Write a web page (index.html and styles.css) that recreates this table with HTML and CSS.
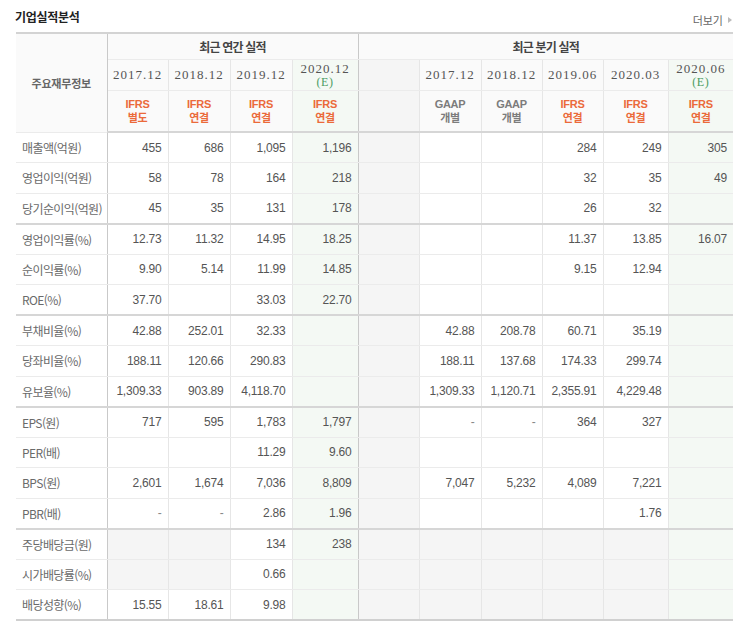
FILE: index.html
```html
<!DOCTYPE html>
<html lang="ko">
<head>
<meta charset="utf-8">
<title>기업실적분석</title>
<link rel="stylesheet" href="styles.css">
</head>
<body>
<div class="wrap">
  <div class="head">
    <h3 class="title">기업실적분석</h3>
    <a class="more" href="#">더보기<span class="arr"></span></a>
  </div>
  <table class="perf">
    <colgroup>
      <col class="c-label">
      <col class="c61"><col class="c62"><col class="c62"><col class="c66">
      <col class="c61"><col class="c62"><col class="c61"><col class="c61"><col class="c65"><col class="c65">
    </colgroup>
    <thead>
      <tr class="h1">
        <th rowspan="3" class="lab-h major-r">주요재무정보</th>
        <th colspan="4" class="grp major-r">최근 연간 실적</th>
        <th colspan="6" class="grp">최근 분기 실적</th>
      </tr>
      <tr class="h2">
        <th class="yr">2017.12</th>
        <th class="yr">2018.12</th>
        <th class="yr">2019.12</th>
        <th class="yr est major-r"><span class="ln y1">2020.12</span><em class="ln">(E)</em></th>
        <th class="yr gray"></th>
        <th class="yr">2017.12</th>
        <th class="yr">2018.12</th>
        <th class="yr">2019.06</th>
        <th class="yr">2020.03</th>
        <th class="yr est"><span class="ln y1">2020.06</span><em class="ln">(E)</em></th>
      </tr>
      <tr class="h3">
        <th class="acc"><span class="ln">IFRS</span><span class="ln">별도</span></th>
        <th class="acc"><span class="ln">IFRS</span><span class="ln">연결</span></th>
        <th class="acc"><span class="ln">IFRS</span><span class="ln">연결</span></th>
        <th class="acc est major-r"><span class="ln">IFRS</span><span class="ln">연결</span></th>
        <th class="gray"></th>
        <th class="acc gaap"><span class="ln">GAAP</span><span class="ln">개별</span></th>
        <th class="acc gaap"><span class="ln">GAAP</span><span class="ln">개별</span></th>
        <th class="acc"><span class="ln">IFRS</span><span class="ln">연결</span></th>
        <th class="acc"><span class="ln">IFRS</span><span class="ln">연결</span></th>
        <th class="acc est"><span class="ln">IFRS</span><span class="ln">연결</span></th>
      </tr>
    </thead>
    <tbody>
      <tr class="first">
        <th class="lab major-r">매출액(억원)</th>
        <td>455</td><td>686</td><td>1,095</td><td class="est major-r">1,196</td>
        <td class="gray"></td><td></td><td></td><td>284</td><td>249</td><td class="est">305</td>
      </tr>
      <tr>
        <th class="lab major-r">영업이익(억원)</th>
        <td>58</td><td>78</td><td>164</td><td class="est major-r">218</td>
        <td class="gray"></td><td></td><td></td><td>32</td><td>35</td><td class="est">49</td>
      </tr>
      <tr>
        <th class="lab major-r">당기순이익(억원)</th>
        <td>45</td><td>35</td><td>131</td><td class="est major-r">178</td>
        <td class="gray"></td><td></td><td></td><td>26</td><td>32</td><td class="est"></td>
      </tr>
      <tr class="sep">
        <th class="lab major-r">영업이익률(%)</th>
        <td>12.73</td><td>11.32</td><td>14.95</td><td class="est major-r">18.25</td>
        <td class="gray"></td><td></td><td></td><td>11.37</td><td>13.85</td><td class="est">16.07</td>
      </tr>
      <tr>
        <th class="lab major-r">순이익률(%)</th>
        <td>9.90</td><td>5.14</td><td>11.99</td><td class="est major-r">14.85</td>
        <td class="gray"></td><td></td><td></td><td>9.15</td><td>12.94</td><td class="est"></td>
      </tr>
      <tr>
        <th class="lab major-r">ROE(%)</th>
        <td>37.70</td><td></td><td>33.03</td><td class="est major-r">22.70</td>
        <td class="gray"></td><td></td><td></td><td></td><td></td><td class="est"></td>
      </tr>
      <tr class="sep">
        <th class="lab major-r">부채비율(%)</th>
        <td>42.88</td><td>252.01</td><td>32.33</td><td class="est major-r"></td>
        <td class="gray"></td><td>42.88</td><td>208.78</td><td>60.71</td><td>35.19</td><td class="est"></td>
      </tr>
      <tr>
        <th class="lab major-r">당좌비율(%)</th>
        <td>188.11</td><td>120.66</td><td>290.83</td><td class="est major-r"></td>
        <td class="gray"></td><td>188.11</td><td>137.68</td><td>174.33</td><td>299.74</td><td class="est"></td>
      </tr>
      <tr>
        <th class="lab major-r">유보율(%)</th>
        <td>1,309.33</td><td>903.89</td><td>4,118.70</td><td class="est major-r"></td>
        <td class="gray"></td><td>1,309.33</td><td>1,120.71</td><td>2,355.91</td><td>4,229.48</td><td class="est"></td>
      </tr>
      <tr class="sep">
        <th class="lab major-r">EPS(원)</th>
        <td>717</td><td>595</td><td>1,783</td><td class="est major-r">1,797</td>
        <td class="gray"></td><td class="dash">-</td><td class="dash">-</td><td>364</td><td>327</td><td class="est"></td>
      </tr>
      <tr>
        <th class="lab major-r">PER(배)</th>
        <td></td><td></td><td>11.29</td><td class="est major-r">9.60</td>
        <td class="gray"></td><td></td><td></td><td></td><td></td><td class="est"></td>
      </tr>
      <tr>
        <th class="lab major-r">BPS(원)</th>
        <td>2,601</td><td>1,674</td><td>7,036</td><td class="est major-r">8,809</td>
        <td class="gray"></td><td>7,047</td><td>5,232</td><td>4,089</td><td>7,221</td><td class="est"></td>
      </tr>
      <tr>
        <th class="lab major-r">PBR(배)</th>
        <td class="dash">-</td><td class="dash">-</td><td>2.86</td><td class="est major-r">1.96</td>
        <td class="gray"></td><td></td><td></td><td></td><td>1.76</td><td class="est"></td>
      </tr>
      <tr class="sep">
        <th class="lab major-r">주당배당금(원)</th>
        <td class="gray"></td><td class="gray"></td><td>134</td><td class="est major-r">238</td>
        <td class="gray"></td><td class="gray"></td><td class="gray"></td><td class="gray"></td><td class="gray"></td><td class="est"></td>
      </tr>
      <tr>
        <th class="lab major-r">시가배당률(%)</th>
        <td class="gray"></td><td class="gray"></td><td>0.66</td><td class="est major-r"></td>
        <td class="gray"></td><td class="gray"></td><td class="gray"></td><td class="gray"></td><td class="gray"></td><td class="est"></td>
      </tr>
      <tr>
        <th class="lab major-r">배당성향(%)</th>
        <td>15.55</td><td>18.61</td><td>9.98</td><td class="est major-r"></td>
        <td class="gray"></td><td class="gray"></td><td class="gray"></td><td class="gray"></td><td class="gray"></td><td class="est"></td>
      </tr>
    </tbody>
  </table>
</div>
</body>
</html>
```
FILE: styles.css
```css
html, body {
  margin: 0;
  padding: 0;
  background: #fff;
}
body {
  font-family: "Noto Sans CJK KR", "Noto Sans", sans-serif;
  color: #555;
}
.wrap {
  width: 717px;
  padding: 0 10px 0 16px;
}
.head {
  display: flex;
  justify-content: space-between;
  align-items: flex-start;
  height: 32px;
}
.title {
  margin: 0;
  padding-top: 8px;
  margin-left: -1px;
  font-size: 12px;
  line-height: 18px;
  font-weight: 700;
  letter-spacing: -0.3px;
  color: #222;
}
.more {
  display: flex;
  align-items: center;
  margin-top: 12px;
  margin-right: 0;
  font-size: 11px;
  line-height: 16px;
  letter-spacing: 0;
  color: #666;
  text-decoration: none;
}
.arr {
  display: inline-block;
  width: 0;
  height: 0;
  margin-left: 5px;
  margin-right: 1px;
  border-left: 4px solid #bbb;
  border-top: 3px solid transparent;
  border-bottom: 3px solid transparent;
}
.perf {
  width: 717px;
  table-layout: fixed;
  border-collapse: collapse;
  border-top: 2px solid #d3d3d3;
  border-bottom: 2px solid #d0d0d0;
}
.c-label { width: 91px; }
.c61 { width: 61px; }
.c62 { width: 62px; }
.c65 { width: 65px; }
.c66 { width: 66px; }
.perf th,
.perf td {
  padding: 0;
  border: 1px solid #ebebeb;
  border-left-color: #e6e6e6;
  border-right-color: #e6e6e6;
}
.perf thead th {
  background: #fafafa;
}
.perf .major-r {
  border-right: 1px solid #c9c9c9;
}
.perf tr:first-child th,
.perf tr:first-child td {
  border-top: 0;
}
.perf td:last-child,
.perf th:last-child {
  border-right: 0;
}
.perf .lab-h,
.perf .lab {
  border-left: 0;
}
.h1 { height: 26px; }
.h2 { height: 31px; }
.h3 { height: 42px; }
.ln {
  display: block;
}
.lab-h {
  font-size: 11px;
  font-weight: 700;
  letter-spacing: -0.2px;
  color: #666;
  border-bottom: 2px solid #d6d6d6;
}
.grp {
  font-size: 12px;
  font-weight: 700;
  letter-spacing: -0.8px;
  color: #444;
}
.yr {
  font-family: "Liberation Serif", "DejaVu Serif", serif;
  font-size: 13px;
  font-weight: 400;
  letter-spacing: 1px;
  line-height: 15px;
  color: #555;
}
.yr .y1 {
  line-height: 15px;
}
.yr em {
  font-style: normal;
  font-size: 12px;
  line-height: 13px;
  color: #4b9c63;
  letter-spacing: 0.5px;
}
.h3 th {
  border-bottom: 2px solid #d6d6d6;
}
.acc {
  font-family: "Liberation Sans", "Noto Sans CJK KR", sans-serif;
  font-size: 11px;
  font-weight: 700;
  line-height: 14px;
  letter-spacing: -0.3px;
  color: #eb6a3a;
  padding-top: 1px;
}
.acc.gaap {
  color: #7c7c7c;
}
.perf thead th.est,
.perf td.est {
  background: #f4f9f4;
}
.perf thead th.gray,
.perf td.gray {
  background: #f5f5f5;
}
.perf tbody tr {
  height: 30.5px;
}
.perf tbody tr.sep th,
.perf tbody tr.sep td {
  border-top: 2px solid #d6d6d6;
}
.lab {
  text-align: left;
  padding-left: 6px !important;
  font-size: 12px;
  font-weight: 400;
  letter-spacing: -0.6px;
  color: #6a6a6a;
  white-space: nowrap;
}
.perf td {
  text-align: right;
  padding-right: 6px;
  font-family: "Liberation Sans", "Noto Sans", sans-serif;
  font-size: 12px;
  letter-spacing: -0.2px;
  color: #555;
}
.perf td.dash {
  color: #888;
}
```
